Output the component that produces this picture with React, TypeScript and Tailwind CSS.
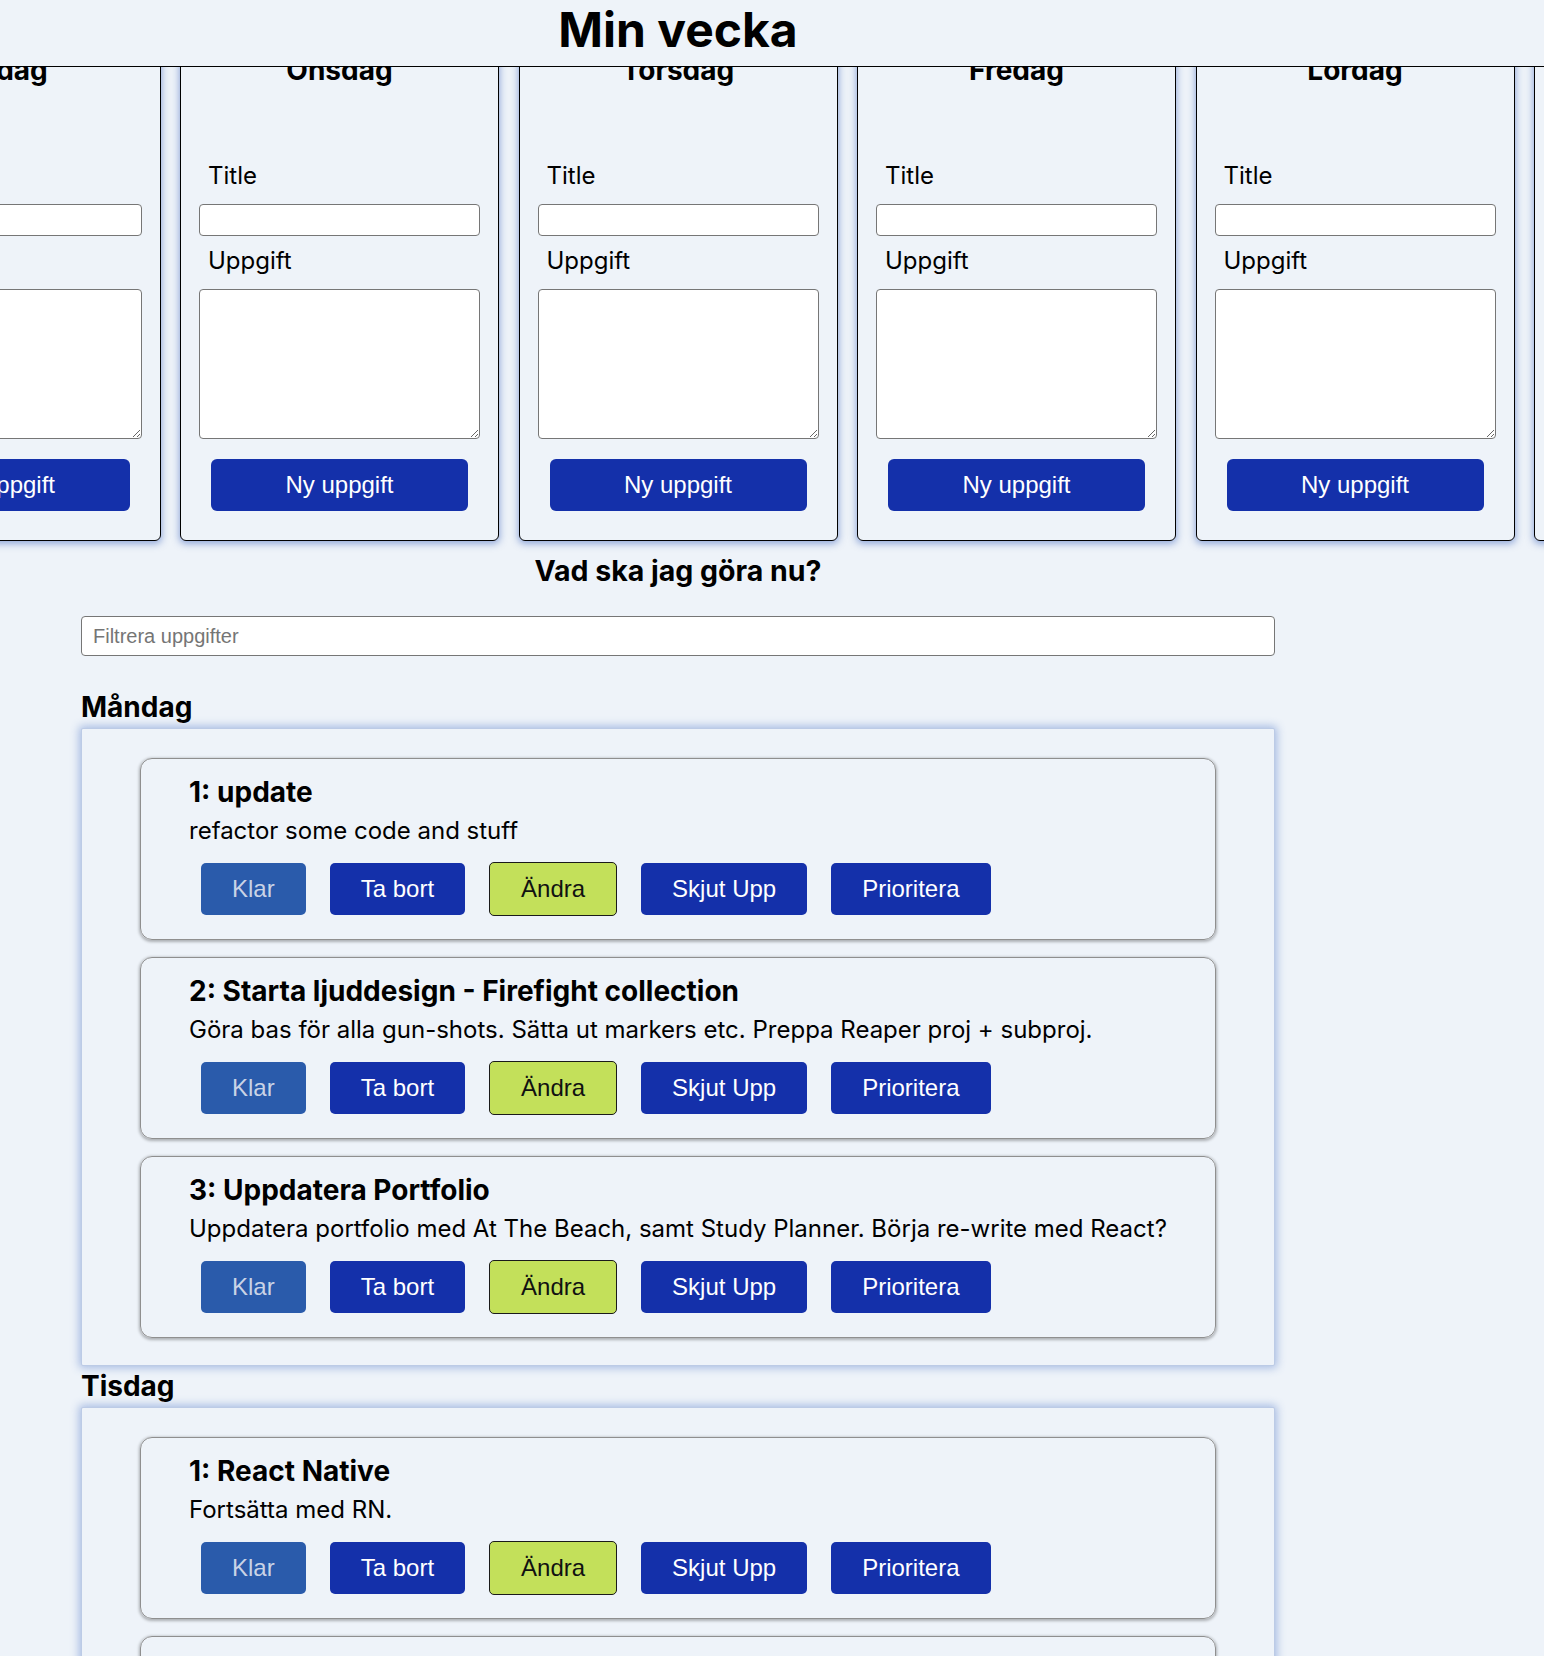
import React from 'react';

// Veckoplanerare: dagkort överst, uppgiftslista under
const days = ['Måndag', 'Tisdag', 'Onsdag', 'Torsdag', 'Fredag', 'Lördag', 'Söndag'];

type Task = { title: string; text: string };

const schedule: { day: string; tasks: Task[] }[] = [
  {
    day: 'Måndag',
    tasks: [
      { title: '1: update', text: 'refactor some code and stuff' },
      {
        title: '2: Starta ljuddesign - Firefight collection',
        text: 'Göra bas för alla gun-shots. Sätta ut markers etc. Preppa Reaper proj + subproj.',
      },
      {
        title: '3: Uppdatera Portfolio',
        text: 'Uppdatera portfolio med At The Beach, samt Study Planner. Börja re-write med React?',
      },
    ],
  },
  {
    day: 'Tisdag',
    tasks: [
      { title: '1: React Native', text: 'Fortsätta med RN.' },
      { title: '2: Plugga', text: 'Läsa kapitel 4.' },
    ],
  },
];

const arial = "font-['Liberation_Sans',Arial,sans-serif]";

const DayCard: React.FC<{ day: string }> = ({ day }) => (
  <div className="w-[319px] shrink-0 rounded-[6px] border border-black bg-[#eef3f9] px-[18px] pt-[33px] pb-[29px] shadow-[0_2px_7px_1px_rgba(60,100,190,0.5)]">
    <h3 className="text-center text-[28px] leading-[33px] font-bold">{day}</h3>
    <label className="mt-[75px] ml-[9px] block text-[24px] leading-[28px]">Title</label>
    <input
      type="text"
      className="mt-[14px] block h-[32px] w-full rounded-[4px] border border-[#767676] bg-white"
    />
    <label className="mt-[11px] ml-[9px] block text-[24px] leading-[28px]">Uppgift</label>
    <textarea className="mt-[14px] block h-[150px] w-full rounded-[4px] border border-[#767676] bg-white" />
    <button
      className={`mx-auto mt-[20px] block h-[52px] w-[257px] rounded-[6px] bg-[#1430aa] text-[24px] text-white ${arial}`}
    >
      Ny uppgift
    </button>
  </div>
);

const TaskCard: React.FC<{ task: Task }> = ({ task }) => (
  <div className="rounded-[12px] border border-[#8f8f8f] pt-[17px] pr-[20px] pb-[23.5px] pl-[48px] shadow-[0_1px_3px_1px_rgba(0,0,0,0.28)]">
    <h3 className="text-[28px] leading-[33px] font-bold">{task.title}</h3>
    <p className="mt-[8px] text-[24px] leading-[28px]">{task.text}</p>
    <div className={`mt-[17px] ml-[12px] flex h-[54px] items-center gap-[24px] text-[24px] ${arial}`}>
      <button className="h-[52px] rounded-[5px] bg-[#2a5bab] px-[31px] text-[#c9d3e6]">Klar</button>
      <button className="h-[52px] rounded-[5px] bg-[#1430aa] px-[31px] text-white">Ta bort</button>
      <button className="h-[54px] rounded-[5px] border border-[#1a1a1a] bg-[#c3e05a] px-[31px] text-[#111]">
        Ändra
      </button>
      <button className="h-[52px] rounded-[5px] bg-[#1430aa] px-[31px] text-white">Skjut Upp</button>
      <button className="h-[52px] rounded-[5px] bg-[#1430aa] px-[31px] text-white">Prioritera</button>
    </div>
  </div>
);

export default function App() {
  return (
    <div className="min-h-[1656px] overflow-hidden bg-[#eef3f9] font-['Inter','Noto_Sans',sans-serif] text-black">
      {/* Header ligger över dagkorten */}
      <header className="relative z-10 h-[67px] border-b border-black bg-[#eef3f9]">
        <h1 className="ml-[81px] w-[1194px] pt-[2px] text-center text-[48px] leading-[56px] font-bold">
          Min vecka
        </h1>
      </header>

      {/* Dagkort, scrollade i sidled */}
      <div className="-mt-[47px] overflow-hidden pb-[13px]">
        <div className="ml-[-497px] flex w-max gap-[19.5px]">
          {days.map((d) => (
            <DayCard key={d} day={d} />
          ))}
        </div>
      </div>

      <main className="ml-[81px] w-[1194px]">
        <h2 className="text-center text-[28.5px] leading-[33px] font-bold">Vad ska jag göra nu?</h2>
        <input
          type="text"
          placeholder="Filtrera uppgifter"
          className={`mt-[29px] block h-[40px] w-full rounded-[4px] border border-[#767676] bg-white px-[11px] text-[20px] placeholder:text-[#757575] ${arial}`}
        />

        <div className="mt-[31px] flex flex-col">
          {schedule.map((s) => (
            <section key={s.day}>
              <h3 className="mt-[4px] text-[28px] leading-[33px] font-bold">{s.day}</h3>
              <div className="mt-[3.5px] flex flex-col gap-[16.5px] rounded-[2px] border border-[#bccbe6] bg-[#eef3f9] px-[58px] pt-[29px] pb-[27px] shadow-[0_0_8px_2px_rgba(80,120,200,0.45)]">
                {s.tasks.map((t) => (
                  <TaskCard key={t.title} task={t} />
                ))}
              </div>
            </section>
          ))}
        </div>
      </main>
    </div>
  );
}
